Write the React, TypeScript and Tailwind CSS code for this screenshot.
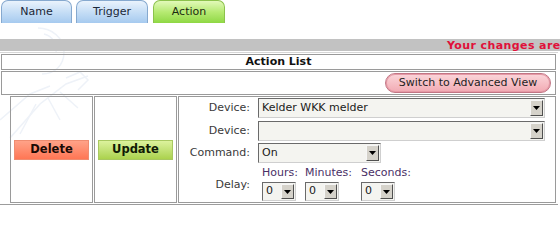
import type { ReactNode } from 'react';

function Tab({ label, active, className }: { label: string; active?: boolean; className: string }) {
  const skin = active
    ? 'border-[#8cc24c] bg-gradient-to-b from-[#e2f9b8] via-[#b6ea72] to-[#8fd843] text-[#1b2a10]'
    : 'border-[#86a9cf] bg-gradient-to-b from-[#eaf3fc] via-[#c6def6] to-[#a6caef] text-[#1b2838]';
  return (
    <div
      className={`flex h-[23px] items-center justify-center rounded-t-[7px] border border-b-0 text-[11px] ${skin} ${className}`}
    >
      {label}
    </div>
  );
}

function FakeSelect({ value, className }: { value?: string; className: string }) {
  return (
    <div
      className={`flex items-stretch border border-t-[#6a6a6a] border-l-[#6a6a6a] border-r-[#cfcfcf] border-b-[#cfcfcf] bg-[#f4f4f0] ${className}`}
    >
      <div className="flex flex-1 items-center overflow-hidden whitespace-nowrap pl-[3px] text-[11px] text-[#1a1a1a]">
        {value}
      </div>
      <div className="my-[1px] mr-[1px] flex w-[13px] items-center justify-center border border-t-[#f6f6f6] border-l-[#f6f6f6] border-r-[#505050] border-b-[#505050] bg-[#d5d2ca]">
        <svg width="7" height="4" viewBox="0 0 7 4">
          <path d="M0 0h7L3.5 4z" fill="#000" />
        </svg>
      </div>
    </div>
  );
}

function Row({ label, children, className }: { label: string; children: ReactNode; className: string }) {
  return (
    <div className={`flex items-center ${className}`}>
      <div className="w-[71px] text-right text-[11px] text-[#3a3a3a]">{label}</div>
      <div className="ml-[8px] flex-1">{children}</div>
    </div>
  );
}

export default function App() {
  return (
    <div className="relative h-[209px] w-[560px] overflow-hidden bg-white font-['DejaVu_Sans',sans-serif]">
      {/* faint watermark behind the page */}
      <svg className="absolute left-0 top-[8px]" width="100" height="140" viewBox="0 0 100 140" fill="none">
        <g stroke="#eef2f8" strokeWidth="1.5">
          <path d="M38 20c14 0 26 10 26 24s-10 22-22 22" />
          <path d="M44 26c8 2 14 10 12 18" />
          <path d="M10 130L40 96l26-20 22-8" />
          <path d="M0 112l30-26 20-8" />
          <path d="M20 126l16-30M48 90l12 22M60 84l18 16" />
          <path d="M66 70l14-6 8 8-10 10" />
        </g>
      </svg>

      <div className="relative flex">
        <Tab label="Name" className="ml-[1px] w-[71px]" />
        <Tab label="Trigger" className="ml-[4px] w-[72px]" />
        <Tab label="Action" active className="ml-[5px] w-[72px]" />
      </div>

      <div className="relative mt-[16px] h-[12px] overflow-hidden whitespace-nowrap bg-[#c2c2c2] pl-[447px] text-[11px] font-bold leading-[13px] tracking-[0.4px] text-[#e0103a]">
        Your changes are
      </div>

      <div className="relative mt-[1px] w-[558px] border-t border-b border-t-[#d6d6d6] border-b-[#9c9c9c] pt-[1px] pb-[1px]">
        <div className="ml-[1px] flex h-[16px] w-[555px] items-center justify-center border border-[#9a9a9a] text-[11px] font-bold text-[#111]">
          Action List
        </div>

        <div className="ml-[1px] mt-[1px] flex h-[24px] w-[555px] items-center justify-end border border-[#9a9a9a] pr-[4px]">
          <div className="flex h-[20px] w-[166px] items-center justify-center rounded-full border border-[#c27685] bg-gradient-to-b from-[#fbd6da] to-[#f1aab3] text-[11px] text-[#1e1e1e] shadow-[inset_0_0_0_1px_#e59aa6]">
            Switch to Advanced View
          </div>
        </div>

        <div className="ml-[10px] mt-[1px] flex h-[107px] gap-[1px]">
          <div className="flex w-[83px] items-center justify-center border border-[#9a9a9a]">
            <div className="flex h-[20px] w-[75px] items-center justify-center border border-[#ef8c70] bg-gradient-to-b from-[#ffa288] to-[#ff7654] text-[11.5px] font-bold text-[#1a0a05]">
              Delete
            </div>
          </div>
          <div className="flex w-[83px] items-center justify-center border border-[#9a9a9a]">
            <div className="flex h-[20px] w-[75px] items-center justify-center border border-[#a8c860] bg-gradient-to-b from-[#dcf29c] to-[#abd24c] text-[11.5px] font-bold text-[#101a05]">
              Update
            </div>
          </div>
          <div className="flex w-[378px] flex-col border border-[#9a9a9a] pt-[1px]">
            <Row label="Device:" className="h-[20px]">
              <FakeSelect value="Kelder WKK melder" className="h-[20px] w-[287px]" />
            </Row>
            <Row label="Device:" className="mt-[3px] h-[20px]">
              <FakeSelect className="h-[20px] w-[287px]" />
            </Row>
            <Row label="Command:" className="mt-[2px] h-[20px]">
              <FakeSelect value="On" className="h-[20px] w-[123px]" />
            </Row>
            <div className="mt-[3px] flex items-center">
              <div className="w-[71px] pt-[4px] text-right text-[11px] text-[#3a3a3a]">Delay:</div>
              <div className="ml-[12px] flex text-[11px] text-[#4a2f66]">
                <div className="w-[43px]">
                  <div className="leading-[13px]">Hours:</div>
                  <FakeSelect value="0" className="mt-[3px] h-[19px] w-[34px]" />
                </div>
                <div className="w-[56px]">
                  <div className="leading-[13px]">Minutes:</div>
                  <FakeSelect value="0" className="mt-[3px] h-[19px] w-[34px]" />
                </div>
                <div>
                  <div className="leading-[13px]">Seconds:</div>
                  <FakeSelect value="0" className="mt-[3px] h-[19px] w-[34px]" />
                </div>
              </div>
            </div>
          </div>
        </div>
      </div>
    </div>
  );
}
